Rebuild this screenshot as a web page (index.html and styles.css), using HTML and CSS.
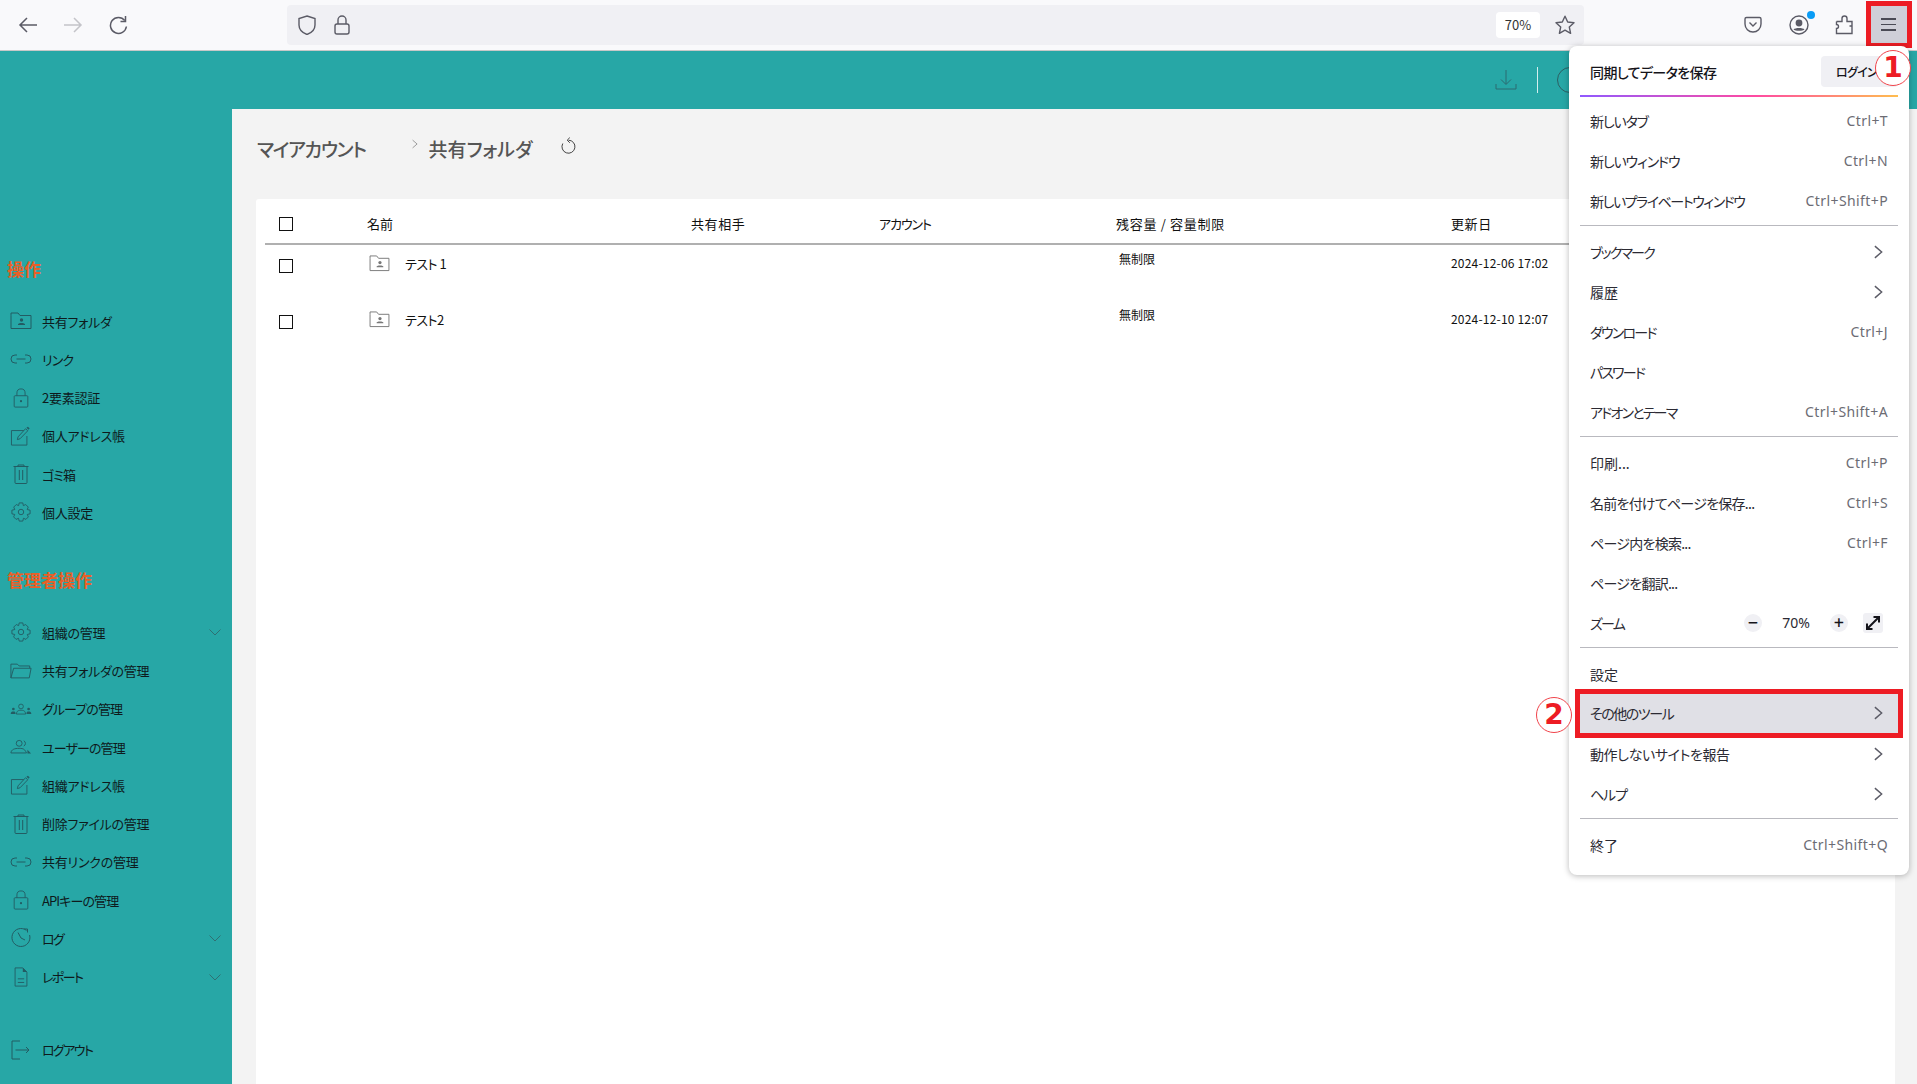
FILE: index.html
```html
<!DOCTYPE html>
<html lang="ja">
<head>
<meta charset="utf-8">
<title>共有フォルダ</title>
<link rel="stylesheet" href="styles.css">
</head>
<body>
<svg class="defs" width="0" height="0" aria-hidden="true">
  <symbol id="i-share" viewBox="0 0 22 18"><path d="M1 3.500V16.500H21V3.500H10L8 1H1Z" fill="none" stroke="currentColor"/><circle cx="11.500" cy="8" r="1.700" fill="currentColor"/><path d="M8 13H15V12L13 11H10L8 12Z" fill="currentColor"/></symbol>
  <symbol id="i-link" viewBox="0 0 22 12"><path d="M7 2H5A4 4 0 0 0 5 10H7M15 2H17A4 4 0 0 1 17 10H15M6.500 6H15.500" fill="none" stroke="currentColor"/></symbol>
  <symbol id="i-lock" viewBox="0 0 18 22"><rect x="1.500" y="8.500" width="15" height="12.500" rx="1" fill="none" stroke="currentColor"/><path d="M4.500 8.500V5.500A4.500 4.500 0 0 1 13.500 5.500V8.500" fill="none" stroke="currentColor"/><circle cx="9" cy="14.500" r="1.200" fill="currentColor"/></symbol>
  <symbol id="i-edit" viewBox="0 0 24 22"><path d="M15 5H1.500V21H18.500V11" fill="none" stroke="currentColor"/><path d="M8 15L8.700 12L17 3L19.500 5.200L11 14Z" fill="none" stroke="currentColor"/><path d="M18 2L19.500 .8L21.500 2.500L20.400 4Z" fill="currentColor"/></symbol>
  <symbol id="i-trash" viewBox="0 0 16 20"><path d="M.5 2.500H15.500M5 2.500V1H11V2.500M2 2.500V18.500A1 1 0 0 0 3 19.500H13A1 1 0 0 0 14 18.500V2.500M6.300 6V16M9.700 6V16" fill="none" stroke="currentColor"/></symbol>
  <symbol id="i-gear" viewBox="0 0 22 22"><path d="M9 1H13L13.600 4L16.200 2.800L19 5.600L17.800 8.300L21 9V13L17.900 13.700L19.100 16.400L16.400 19.100L13.700 17.900L13 21H9L8.300 17.900L5.600 19.100L2.900 16.400L4.100 13.700L1 13V9L4.200 8.300L3 5.600L5.800 2.800L8.400 4Z" fill="none" stroke="currentColor"/><circle cx="11" cy="11" r="3" fill="none" stroke="currentColor"/></symbol>
  <symbol id="i-folder" viewBox="0 0 24 18"><path d="M1 16.500V1.500H8L10 3.500H21.500V6" fill="none" stroke="currentColor"/><path d="M1 16.500L4 6H23L21 16.500Z" fill="none" stroke="currentColor"/></symbol>
  <symbol id="i-group" viewBox="0 0 26 14"><circle cx="13" cy="4" r="2.800" fill="none" stroke="currentColor"/><path d="M7.500 13C8 9 10 8.500 13 8.500S18 9 18.500 13Z" fill="none" stroke="currentColor"/><circle cx="4" cy="7" r="1.600" fill="currentColor"/><path d="M.8 13C1 10.500 2 10 4 10S6.500 10.500 6.500 13Z" fill="currentColor"/><circle cx="22" cy="7" r="1.600" fill="currentColor"/><path d="M19.500 13C19.500 10.500 20 10 22 10S25 10.500 25.200 13Z" fill="currentColor"/></symbol>
  <symbol id="i-user" viewBox="0 0 24 16"><circle cx="10" cy="4" r="3.200" fill="none" stroke="currentColor"/><path d="M1 14.500C1.500 10.500 5 9.500 10 9.500S16 10.500 18 14.500Z" fill="none" stroke="currentColor"/><path d="M15 1.200A3.200 3.200 0 0 1 15 7" fill="none" stroke="currentColor"/><path d="M19 11L23 15H19Z" fill="currentColor"/></symbol>
  <symbol id="i-clock" viewBox="0 0 20 20"><path d="M15.500 2.400A9 9 0 1 0 18.600 7" fill="none" stroke="currentColor"/><path d="M7 4.500L10 10L14 12M13 1H16.500V4.500" fill="none" stroke="currentColor"/></symbol>
  <symbol id="i-doc" viewBox="0 0 16 22"><path d="M10 1H1.500V21H14.500V5.500Z" fill="none" stroke="currentColor"/><path d="M10 1V5.500H14.500Z" fill="currentColor"/><path d="M4.500 13H11.500M4.500 17H11.500" fill="none" stroke="currentColor"/></symbol>
  <symbol id="i-logout" viewBox="0 0 20 20"><path d="M9 1H1V19H9M4.500 10H18M15 7L18 10L15 13" fill="none" stroke="currentColor"/></symbol>
  <symbol id="i-chev" viewBox="0 0 12 7"><path d="M.5 .5L6 6L11.500 .5" fill="none" stroke="currentColor"/></symbol>
  <symbol id="i-right" viewBox="0 0 10 15"><path d="M1 1L8.500 7.500L1 14" fill="none" stroke="currentColor" stroke-width="1.600"/></symbol>
</svg>

<div class="window">
  <header class="toolbar">
    <div class="nav-buttons">
      <svg class="tb-icon" viewBox="0 0 20 20"><path d="M1.500 10H19M9 3L2 10L9 17" fill="none" stroke="currentColor" stroke-width="1.500"/></svg>
      <svg class="tb-icon is-off" viewBox="0 0 20 20"><path d="M1 10H18.500M11 3L18 10L11 17" fill="none" stroke="currentColor" stroke-width="1.500"/></svg>
      <svg class="tb-icon" viewBox="0 0 20 20"><path d="M16.800 5.500A8 8 0 1 0 18.400 11.500" fill="none" stroke="currentColor" stroke-width="1.500"/><path d="M17.500 1V6.500H12.500" fill="none" stroke="currentColor" stroke-width="1.500"/></svg>
    </div>
    <div class="urlbar">
      <svg class="tb-icon" viewBox="0 0 20 20"><path d="M10 1L18 3.500V10C18 15 14 18 10 19.500C6 18 2 15 2 10V3.500Z" fill="none" stroke="currentColor" stroke-width="1.400"/></svg>
      <svg class="tb-icon lock" viewBox="0 0 20 20"><rect x="3" y="9" width="14" height="10" rx="2" fill="none" stroke="currentColor" stroke-width="1.400"/><path d="M6 9V5A4 4 0 0 1 14 5V9" fill="none" stroke="currentColor" stroke-width="1.400"/></svg>
      <span class="zoom-pill">70%</span>
      <svg class="tb-icon star" viewBox="0 0 20 20"><path d="M10 1.200L12.700 7L19 7.700L14.300 12L15.600 18.300L10 15.100L4.400 18.300L5.700 12L1 7.700L7.300 7Z" fill="none" stroke="currentColor" stroke-width="1.400" stroke-linejoin="round"/></svg>
    </div>
    <div class="tb-right">
      <svg class="tb-icon" viewBox="0 0 20 20"><path d="M3.500 2.500H16.500A1.500 1.500 0 0 1 18 4V9A8 8 0 0 1 2 9V4A1.500 1.500 0 0 1 3.500 2.500Z" fill="none" stroke="currentColor" stroke-width="1.400"/><path d="M6.500 7.500L10 11L13.500 7.500" fill="none" stroke="currentColor" stroke-width="1.400"/></svg>
      <span class="account">
        <svg class="tb-icon" viewBox="0 0 20 20"><circle cx="10" cy="10" r="9" fill="none" stroke="currentColor" stroke-width="1.400"/><circle cx="10" cy="8" r="3.400" fill="currentColor"/><path d="M4.500 14.500C6 12.500 14 12.500 15.500 14.500C14 16.300 6 16.300 4.500 14.500Z" fill="currentColor"/></svg>
        <i class="badge"></i>
      </span>
      <svg class="tb-icon puzzle" viewBox="0 0 20 20"><path d="M1.500 6.500H7V3.500A2.500 2.500 0 0 1 12 3.500V6.500H17V11H14.500M1.500 6.500V9.500A2 2 0 0 1 1.500 13.500V18.500H17V11" fill="none" stroke="currentColor" stroke-width="1.400"/></svg>
      <span class="hamburger"><i></i><i></i><i></i></span>
    </div>
  </header>

  <div class="app">
    <aside class="sidebar">
      <h2 class="side-title first">操作</h2>
      <ul class="side-list">
        <li><svg class="s-i"><use href="#i-share"/></svg>共有フォルダ</li>
        <li class="k1"><svg class="s-i"><use href="#i-link"/></svg>リンク</li>
        <li><svg class="s-i"><use href="#i-lock"/></svg>2要素認証</li>
        <li><svg class="s-i"><use href="#i-edit"/></svg>個人アドレス帳</li>
        <li class="k1"><svg class="s-i"><use href="#i-trash"/></svg>ゴミ箱</li>
        <li><svg class="s-i"><use href="#i-gear"/></svg>個人設定</li>
      </ul>
      <h2 class="side-title">管理者操作</h2>
      <ul class="side-list">
        <li><svg class="s-i"><use href="#i-gear"/></svg>組織の管理<svg class="s-chev"><use href="#i-chev"/></svg></li>
        <li><svg class="s-i"><use href="#i-folder"/></svg>共有フォルダの管理</li>
        <li class="k1"><svg class="s-i"><use href="#i-group"/></svg>グループの管理</li>
        <li class="k1"><svg class="s-i"><use href="#i-user"/></svg>ユーザーの管理</li>
        <li><svg class="s-i"><use href="#i-edit"/></svg>組織アドレス帳</li>
        <li><svg class="s-i"><use href="#i-trash"/></svg>削除ファイルの管理</li>
        <li><svg class="s-i"><use href="#i-link"/></svg>共有リンクの管理</li>
        <li class="k1"><svg class="s-i"><use href="#i-lock"/></svg>APIキーの管理</li>
        <li class="k2"><svg class="s-i"><use href="#i-clock"/></svg>ログ<svg class="s-chev"><use href="#i-chev"/></svg></li>
        <li class="k2"><svg class="s-i"><use href="#i-doc"/></svg>レポート<svg class="s-chev"><use href="#i-chev"/></svg></li>
      </ul>
      <ul class="side-list logout">
        <li class="k2"><svg class="s-i"><use href="#i-logout"/></svg>ログアウト</li>
      </ul>
    </aside>

    <div class="topbar">
      <svg class="dl-icon" viewBox="0 0 22 22"><path d="M11 1V15M6 10.500L11 15.500L16 10.500M1 15V20H21V15" fill="none" stroke="currentColor"/></svg>
      <span class="top-divider"></span>
      <span class="help-circle"></span>
    </div>

    <main class="content">
      <div class="crumbs">
        <span class="crumb crumb-kana">マイアカウント</span>
        <svg class="crumb-sep"><use href="#i-right"/></svg>
        <span class="crumb">共有フォルダ</span>
        <svg class="refresh" viewBox="0 0 16 18"><path d="M8.500 3.200A6.500 6.500 0 1 1 2.800 6.500" fill="none" stroke="currentColor"/><path d="M9.800 .6L7.200 3.200L9.800 5.800" fill="none" stroke="currentColor"/></svg>
      </div>
      <section class="card">
        <div class="row head">
          <span class="check"></span>
          <span>名前</span>
          <span class="wide-a">共有相手</span>
          <span class="tight-a">アカウント</span>
          <span class="wide-b">残容量 / 容量制限</span>
          <span class="wide-a">更新日</span>
        </div>
        <div class="row item">
          <span class="check"></span>
          <span class="name"><svg class="f-i"><use href="#i-share"/></svg>テスト 1</span>
          <span></span>
          <span></span>
          <span class="quota">無制限</span>
          <span class="date">2024-12-06 17:02</span>
        </div>
        <div class="row item">
          <span class="check"></span>
          <span class="name"><svg class="f-i"><use href="#i-share"/></svg>テスト2</span>
          <span></span>
          <span></span>
          <span class="quota">無制限</span>
          <span class="date">2024-12-10 12:07</span>
        </div>
      </section>
    </main>
  </div>

  <nav class="menu">
    <div class="menu-head">
      <strong>同期してデータを保存</strong>
      <span class="login">ログイン</span>
    </div>
    <div class="menu-grad"></div>
    <div class="mi"><span class="t1">新しいタブ</span><kbd>Ctrl+T</kbd></div>
    <div class="mi"><span class="t1">新しいウィンドウ</span><kbd>Ctrl+N</kbd></div>
    <div class="mi"><span class="t2">新しいプライベートウィンドウ</span><kbd>Ctrl+Shift+P</kbd></div>
    <div class="msep"></div>
    <div class="mi"><span class="t3">ブックマーク</span><svg class="m-chev"><use href="#i-right"/></svg></div>
    <div class="mi"><span>履歴</span><svg class="m-chev"><use href="#i-right"/></svg></div>
    <div class="mi"><span class="t3">ダウンロード</span><kbd>Ctrl+J</kbd></div>
    <div class="mi"><span class="t3">パスワード</span></div>
    <div class="mi"><span class="t3">アドオンとテーマ</span><kbd>Ctrl+Shift+A</kbd></div>
    <div class="msep"></div>
    <div class="mi"><span>印刷...</span><kbd>Ctrl+P</kbd></div>
    <div class="mi"><span class="t0">名前を付けてページを保存...</span><kbd>Ctrl+S</kbd></div>
    <div class="mi"><span class="t0">ページ内を検索...</span><kbd>Ctrl+F</kbd></div>
    <div class="mi"><span class="t0">ページを翻訳...</span></div>
    <div class="mi zoomrow">
      <span class="t3">ズーム</span>
      <div class="zoomctl">
        <span class="zbtn">−</span>
        <span class="zval">70%</span>
        <span class="zbtn">+</span>
        <span class="zfull"><svg viewBox="0 0 16 16"><path d="M2 14L14 2M8.500 2H14V7.500M2 8.500V14H7.500" fill="none" stroke="currentColor" stroke-width="2"/></svg></span>
      </div>
    </div>
    <div class="msep"></div>
    <div class="mi"><span>設定</span></div>
    <div class="mi is-active"><span class="t2">その他のツール</span><svg class="m-chev"><use href="#i-right"/></svg></div>
    <div class="mi"><span class="t-small">動作しないサイトを報告</span><svg class="m-chev"><use href="#i-right"/></svg></div>
    <div class="mi"><span class="t1">ヘルプ</span><svg class="m-chev"><use href="#i-right"/></svg></div>
    <div class="msep"></div>
    <div class="mi"><span>終了</span><kbd>Ctrl+Shift+Q</kbd></div>
  </nav>

  <span class="callout one">1</span>
  <span class="callout two">2</span>
</div>
</body>
</html>
```
FILE: styles.css
```css
* { box-sizing: border-box; }
html, body { margin: 0; height: 100%; overflow: hidden; }
body {
  font-family: "Noto Sans CJK JP", "Noto Sans", sans-serif;
  font-feature-settings: "palt";
  color: #111;
  font-size: 13px;
}
.defs { position: absolute; }
ul { list-style: none; margin: 0; padding: 0; }
h2 { margin: 0; }

.window { position: relative; display: flex; flex-direction: column; height: 1084px; }

/* browser toolbar */
.toolbar {
  height: 51px;
  flex: none;
  display: flex;
  align-items: center;
  background: #f9f9fb;
  border-bottom: 1px solid #c8c8c8;
  color: #5b5b66;
  padding-left: 18px;
}
.tb-icon { width: 20px; height: 20px; display: block; flex: none; }
.is-off { color: #c4c4c9; }
.nav-buttons { display: flex; gap: 25px; width: 269px; flex: none; }
.urlbar {
  width: 1297px;
  height: 40px;
  flex: none;
  display: flex;
  align-items: center;
  background: #f0f0f4;
  border-radius: 4px;
  padding: 0 9px 0 10px;
  font-size: 13px;
}
.lock { margin-left: 15px; }
.zoom-pill {
  margin-left: auto;
  background: #fff;
  border-radius: 4px;
  height: 26px;
  width: 44px;
  text-align: center;
  line-height: 26px;
  color: #333;
}
.star { margin-left: 15px; }
.tb-right { flex: 1; display: flex; align-items: center; gap: 25px; padding-left: 159px; }
.account { position: relative; display: block; margin-left: 1px; }
.puzzle { margin-left: 1px; }
.badge {
  position: absolute; top: -4px; right: -6px;
  width: 8px; height: 8px; border-radius: 50%;
  background: #0a9cf5;
}
.hamburger {
  position: absolute;
  left: 1866px; top: 1px;
  width: 46px; height: 47px;
  background: #cfcfd8;
  border: 5px solid #ed1c24;
  padding-right: 2px;
  display: flex; flex-direction: column; align-items: center; justify-content: center; gap: 4px;
}
.hamburger i { display: block; width: 15px; height: 1.5px; background: #4a4a55; }

/* app */
.app {
  flex: 1;
  min-height: 0;
  display: grid;
  grid-template-columns: 232px 1fr;
  grid-template-rows: 58px 1fr;
  background: #27a7a6;
}
.sidebar {
  grid-row: 1 / 3;
  padding-top: 205px;
  overflow: hidden;
}
.side-title {
  font-size: 17px;
  line-height: 26px;
  font-weight: 700;
  color: #ea5f26;
  padding-left: 7px;
  margin: 35.800px 0 20px;
}
.side-title.first { margin-top: 0; }
.side-list li {
  height: 38.25px;
  display: flex;
  align-items: center;
  font-size: 13px;
  letter-spacing: -.25px;
  color: #0e1a1c;
  position: relative;
}
.side-list li.k1 { letter-spacing: -.9px; }
.side-list li.k2 { letter-spacing: -1.6px; }
.s-i {
  width: 22px; height: 20px;
  margin: 0 10px;
  color: #235c63;
  flex: none;
}
.s-chev {
  position: absolute; left: 209px; top: 16px;
  width: 12px; height: 7px;
  color: #2f7073;
}
.logout { margin-top: 35px; }

.topbar {
  display: flex;
  align-items: center;
  justify-content: flex-end;
  padding-right: 334px;
  color: #2c6a70;
}
.dl-icon { width: 22px; height: 22px; }
.top-divider { width: 1px; height: 26px; background: #d4eeee; margin: 0 19px 0 20px; }
.help-circle { width: 26px; height: 26px; border: 1px solid #2c5f63; border-radius: 50%; }

.content {
  background: #f3f3f3;
  padding: 0 22px 0 24px;
  display: flex;
  flex-direction: column;
  min-height: 0;
}
.crumbs {
  height: 90px;
  flex: none;
  display: flex;
  align-items: center;
  color: #555;
  padding: 0 0 12px 1px;
}
.crumb { font-size: 19px; font-weight: 500; }
.crumb-kana { letter-spacing: -1.3px; }
.crumb-sep { width: 6px; height: 10px; color: #999; margin: -8px 11px 0 46px; }
.refresh { width: 16px; height: 18px; margin: -4px 0 0 28px; color: #444; }

.card { flex: 1; background: #fff; border-radius: 3px 3px 0 0; padding-left: 9px; }
.row {
  display: grid;
  grid-template-columns: 102px 324px 188px 237px 335px 1fr;
}
.head {
  height: 46px;
  border-bottom: 2px solid #b0b0b0;
  align-items: center;
  font-size: 13px;
  padding-top: 5px;
}
.head .check { margin: 1px 0 0 14px; }
.wide-a { letter-spacing: .6px; }
.wide-b { letter-spacing: .7px; }
.tight-a { letter-spacing: -1.1px; }
.item { height: 56px; font-size: 13px; padding-top: 10px; }
.check {
  display: block;
  width: 14px; height: 14px;
  border: 1.5px solid #111;
  margin: 4px 0 0 14px;
}
.name { display: flex; align-items: center; height: 20px; padding-left: 2px; margin-top: -2px; letter-spacing: -.5px; }
.f-i { width: 21px; height: 17px; margin-right: 15px; color: #777; flex: none; }
.quota { font-size: 12px; margin: -5px 0 0 3px; }
.date { font-size: 12px; letter-spacing: .2px; margin-top: -1px; }

/* browser menu */
.menu {
  position: absolute;
  left: 1569px; top: 46px;
  width: 340px; height: 829px;
  background: #fff;
  border-radius: 8px;
  box-shadow: 0 1px 6px rgba(0,0,0,.28);
  padding: 0 11px;
  color: #2b2a33;
  font-size: 14px;
}
.menu-head { height: 49px; display: flex; align-items: center; justify-content: space-between; padding: 2px 0 0 10px; }
.menu-head strong { font-weight: 500; font-size: 14px; color: #15141a; letter-spacing: -.6px; }
.login {
  width: 77px; height: 31px;
  background: #f0f0f4;
  border-radius: 4px;
  font-size: 12px;
  font-weight: 500;
  padding-left: 15px;
  line-height: 31px;
  color: #15141a;
  letter-spacing: -.7px;
}
.menu-grad { height: 1.5px; margin-bottom: 4px; background: linear-gradient(90deg, #9059ff, #ff4aa2 55%, #ffbd4f); }
.mi {
  height: 40px;
  display: flex;
  align-items: center;
  justify-content: space-between;
  padding: 0 10px 0 10px;
  border-radius: 4px;
}
.t-small { letter-spacing: -.4px; }
.t0 { letter-spacing: -.75px; }
.t1 { letter-spacing: -1.15px; }
.t2 { letter-spacing: -1.45px; }
.t3 { letter-spacing: -1.8px; }
.mi kbd { font: inherit; color: #6c6c74; font-size: 14px; font-family: "Noto Sans", sans-serif; letter-spacing: .4px; }
.m-chev { width: 9px; height: 14px; color: #5b5b66; margin-right: 5px; }
.msep { height: 1px; background: #b9b9bf; margin: 4.5px 0 5.5px; }
.mi.is-active {
  background: #e0e0e6;
  outline: 5px solid #ed1c24;
  border-radius: 0;
  height: 39px;
  margin-bottom: 1px;
}
.zoomctl { display: flex; align-items: center; margin-right: 5px; }
.zbtn {
  width: 18px; height: 18px; border-radius: 50%;
  background: #f0f0f4;
  text-align: center;
  line-height: 17px;
  font-size: 18px;
  font-weight: 500;
  color: #15141a;
  font-family: "Noto Sans", sans-serif;
}
.zval { width: 68px; text-align: center; font-family: "Noto Sans", sans-serif; font-size: 14px; }
.zfull { width: 20px; height: 20px; margin-left: 15px; background: #f0f0f4; border-radius: 3px; padding: 2px; color: #15141a; }
.zfull svg { display: block; width: 16px; height: 16px; }

/* numbered callouts */
.callout {
  position: absolute;
  width: 36px; height: 36px;
  border-radius: 50%;
  border: 1.5px solid #f0444b;
  background: #fff;
  color: #ed1c24;
  font-family: "DejaVu Sans", sans-serif;
  font-weight: 700;
  font-size: 28px;
  line-height: 33px;
  text-align: center;
}
.callout.one { left: 1875px; top: 50px; }
.callout.two { left: 1536px; top: 697px; }
```
